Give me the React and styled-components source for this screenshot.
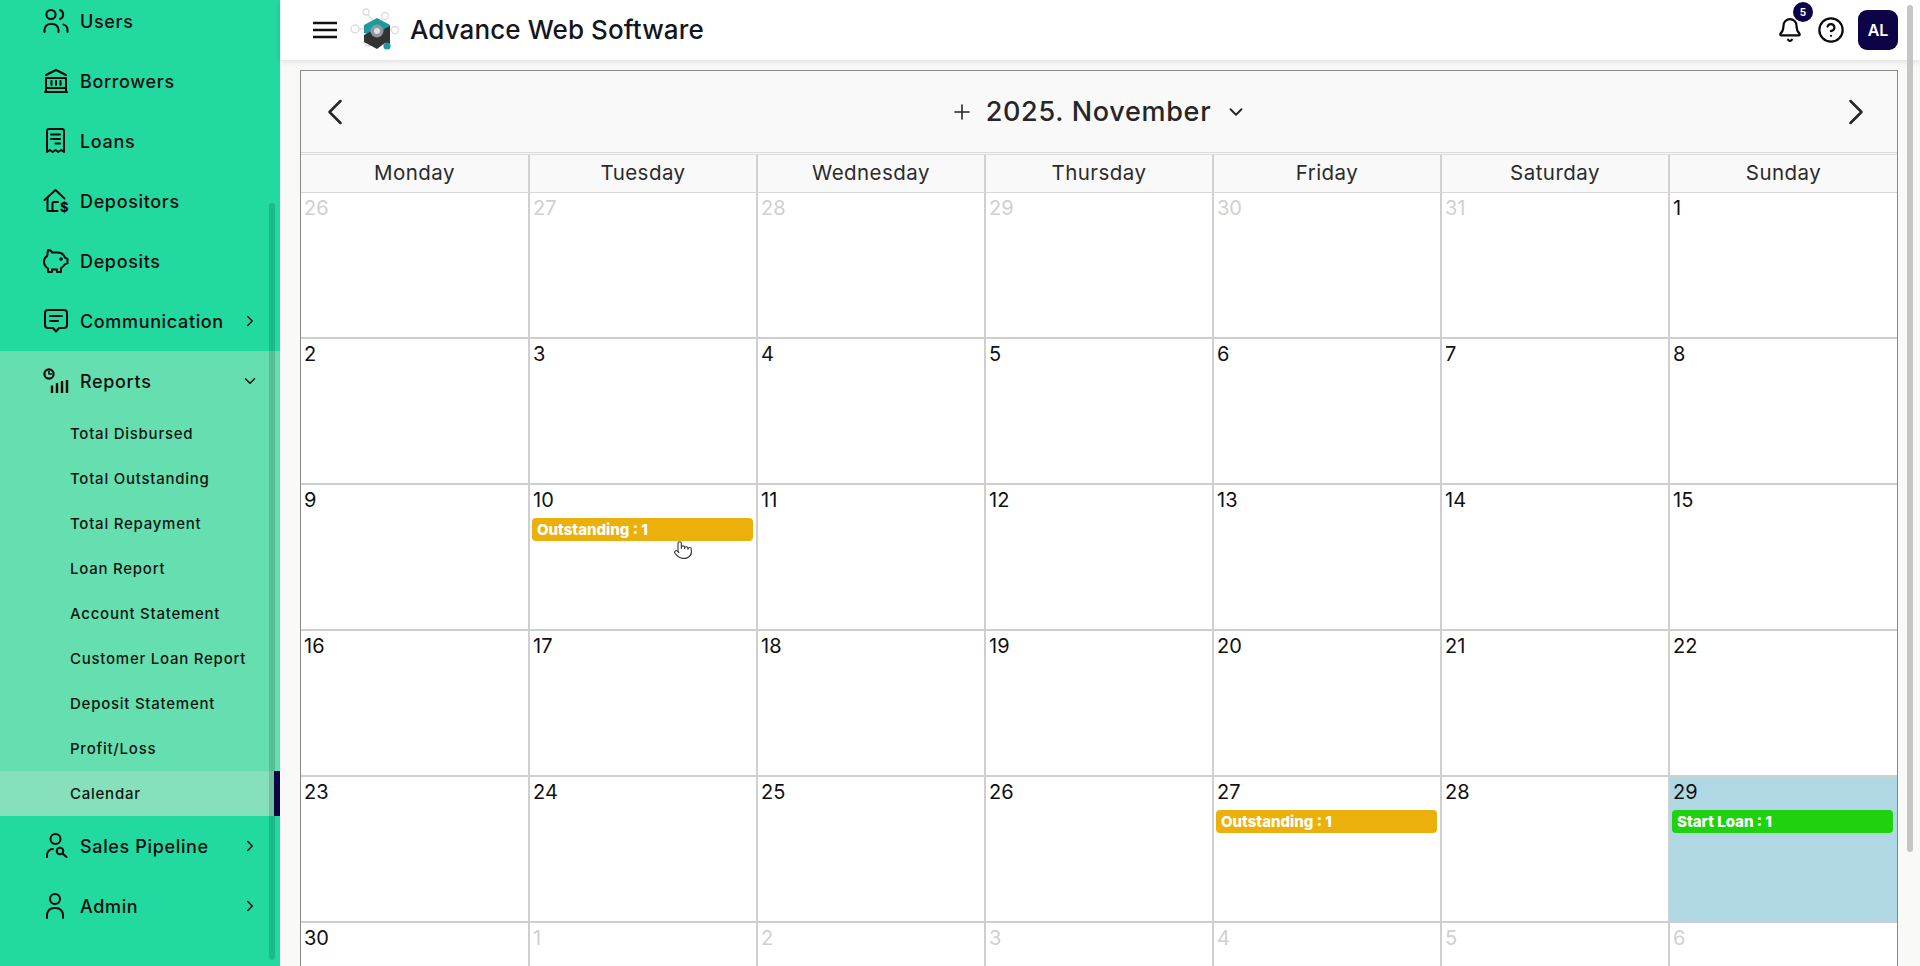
import React from 'react';
import styled, { createGlobalStyle } from 'styled-components';
import { Bell, ChevronDown, ChevronLeft, ChevronRight, CircleHelp, Plus, Pointer } from 'lucide-react';

const GlobalStyle = createGlobalStyle`
    html, body {
        margin: 0;
        height: 100%;
        overflow: hidden;
        background: #fff;
        font-family: Inter, "Open Sans", sans-serif;
    }
    * {
        box-sizing: border-box;
    }
`

const Page = styled.div`
    display: flex;
    height: 966px;
    overflow: hidden;
    position: relative;
`

// sidebar
const Sidebar = styled.aside`
    position: relative;
    width: 280px;
    flex: none;
    background: #22d9a0;
    overflow: hidden;
`
const NavList = styled.nav`
    margin-top: -9px;
`
const NavRow = styled.div`
    display: flex;
    align-items: center;
    height: 60px;
    padding-left: 43px;
    padding-right: 21px;
    color: #0b0f0e;
    font-size: 18px;
    font-weight: 500;
    letter-spacing: 0.65px;
`
const NavIcon = styled.svg`
    width: 26px;
    height: 26px;
    flex: none;
    margin-right: 11px;
    fill: none;
    stroke: #050a09;
    stroke-width: 2;
    stroke-linecap: round;
    stroke-linejoin: round;
`
const NavLabel = styled.span`
    flex: 1;
`
const OpenGroup = styled.div`
    background: #66dfb0;
`
const SubRow = styled.div`
    display: flex;
    align-items: center;
    height: 45px;
    padding-left: 70px;
    color: #0b1512;
    font-size: 15px;
    font-weight: 500;
    letter-spacing: 0.75px;
    background: ${p => (p.$active ? '#85e0bb' : 'transparent')};
    border-right: ${p => (p.$active ? '6px solid #0c0446' : 'none')};
`
const SideThumb = styled.div`
    position: absolute;
    left: 269px;
    top: 203px;
    width: 6px;
    height: 757px;
    border-radius: 3px;
    background: rgba(0, 0, 0, 0.14);
`

// header + content
const Main = styled.main`
    flex: 1;
    min-width: 0;
    display: flex;
    flex-direction: column;
    background: #f9f9f8;
`
const Header = styled.header`
    position: relative;
    z-index: 2;
    display: flex;
    align-items: center;
    flex: none;
    height: 60px;
    padding: 0 22px 0 33px;
    background: #fff;
    box-shadow: 0 2px 6px rgba(0, 0, 0, 0.1);
`
const Burger = styled.svg`
    width: 24px;
    height: 24px;
    flex: none;
    stroke: #111;
    stroke-width: 2.4;
`
const Logo = styled.svg`
    width: 50px;
    height: 50px;
    flex: none;
    margin: 0 10px 0 13px;
`
const Brand = styled.div`
    flex: 1;
    margin-top: -1px;
    color: #15151c;
    font-size: 26px;
    font-weight: 500;
    letter-spacing: 0.1px;
`
const BellBox = styled.div`
    position: relative;
    display: flex;
    margin-right: 14px;
    color: #0a0a0a;
`
const Badge = styled.span`
    position: absolute;
    left: 16px;
    top: -15px;
    width: 20px;
    height: 20px;
    border-radius: 50%;
    background: #0c0446;
    color: #fff;
    font-size: 10px;
    font-weight: 700;
    line-height: 20px;
    text-align: center;
`
const HelpBox = styled.div`
    display: flex;
    margin-right: 13px;
    color: #0a0a0a;
`
const Avatar = styled.div`
    width: 40px;
    height: 40px;
    border-radius: 9px;
    background: #0c0446;
    color: #fff;
    font-size: 16px;
    font-weight: 600;
    line-height: 40px;
    text-align: center;
`
const Content = styled.div`
    flex: 1;
    min-height: 0;
    padding: 10px 22px 0 20px;
    overflow: hidden;
`
const PageThumb = styled.div`
    position: absolute;
    z-index: 3;
    right: 7px;
    top: 5px;
    width: 6px;
    height: 847px;
    border-radius: 3px;
    background: #c6c6c6;
`

// calendar
const columns = '229px repeat(5, 228px) 227px'

const Calendar = styled.section`
    border: 1px solid #888;
    border-bottom: none;
    background: #fff;
`
const CalTop = styled.div`
    display: flex;
    align-items: center;
    justify-content: space-between;
    height: 81px;
    padding: 0 19px 0 12px;
    background: #f9f9f9;
    color: #262626;
`
const MonthTitle = styled.div`
    display: flex;
    align-items: center;
    margin-left: 6px;
`
const MonthText = styled.span`
    margin: 0 14px 0 12px;
    font-size: 27px;
    font-weight: 500;
    letter-spacing: 0.7px;
`
const WeekRow = styled.div`
    display: grid;
    grid-template-columns: ${columns};
    height: 41px;
    border-top: 3px double #dadada;
    border-bottom: 1px solid #d8d8d8;
    background: #f9f9f9;
`
const WeekName = styled.div`
    display: flex;
    align-items: center;
    justify-content: center;
    padding-bottom: 2px;
    border-right: ${p => (p.$last ? 'none' : '2px solid #d2d2d2')};
    color: #2b2b2b;
    font-size: 20.5px;
    font-weight: 400;
    letter-spacing: 0.45px;
`
const DayGrid = styled.div`
    display: grid;
    grid-template-columns: ${columns};
    grid-auto-rows: 146px;
`
const Cell = styled.div`
    position: relative;
    border-right: ${p => (p.$last ? 'none' : '2px solid #cfcfcf')};
    border-bottom: 2px solid #cfcfcf;
    background: ${p => (p.$today ? '#b0d8e4' : '#fff')};
`
const DayNum = styled.div`
    height: 28px;
    margin: 1px 0 4px 3px;
    color: ${p => (p.$muted ? '#d0d0d0' : '#111')};
    font-size: 20px;
    font-weight: 400;
    line-height: 28px;
`
const EventBar = styled.div`
    width: 221px;
    height: 23px;
    margin-left: 2px;
    padding-left: 5px;
    border-radius: 4px;
    background: ${p => p.$color};
    color: #fff;
    font-size: 15px;
    font-weight: 800;
    line-height: 23px;
`
const HandCursor = styled.div`
    position: absolute;
    left: 143px;
    top: 55px;
    display: flex;
    color: #333;
`

const menuTop = ['Users', 'Borrowers', 'Loans', 'Depositors', 'Deposits']
const reports = ['Total Disbursed', 'Total Outstanding', 'Total Repayment', 'Loan Report', 'Account Statement', 'Customer Loan Report', 'Deposit Statement', 'Profit/Loss']
const weekdays = ['Monday', 'Tuesday', 'Wednesday', 'Thursday', 'Friday', 'Saturday', 'Sunday']

const prevDays = [26, 27, 28, 29, 30, 31]
const nextDays = [1, 2, 3, 4, 5, 6]
const days = [
    ...prevDays.map(n => ({ n, muted: true })),
    ...Array.from({ length: 30 }, (_, i) => ({ n: i + 1 })),
    ...nextDays.map(n => ({ n, muted: true })),
]
const events = {
    10: { label: 'Outstanding : 1', color: '#ecb00c' },
    27: { label: 'Outstanding : 1', color: '#ecb00c' },
    29: { label: 'Start Loan : 1', color: '#1fd10f' },
}

const icons = {
    Users: (
        <>
            <circle cx="8" cy="6.5" r="4.6" />
            <path d="M1.5 24v-2a6 6 0 0 1 6-6h2a6 6 0 0 1 6 6v2" />
            <path d="M17 2a4.8 4.8 0 0 1 0 9" />
            <path d="M20.5 16.6a5.5 5.5 0 0 1 4 5.3v2" />
        </>
    ),
    Borrowers: (
        <>
            <path d="M3 7 13 2l10 5" />
            <path d="M3 10h20M3 10v13M23 10v13M2 24h22M3 20h20" />
            <path d="M8.5 13v4M13 13v4M17.5 13v4" />
        </>
    ),
    Loans: (
        <>
            <path d="M4 24V3a2 2 0 0 1 2-2h13a2 2 0 0 1 2 2v21l-2.8-2-2.9 2-2.8-2-2.8 2-2.9-2z" />
            <path d="M8 6.5h9M8 11h9M12.5 15.5h4.5" />
        </>
    ),
    Depositors: (
        <>
            <path d="M1.5 12 12.5 2l9 8.5" />
            <path d="M4.5 10v13h10" />
            <path d="M9.5 23v-7.5a1.5 1.5 0 0 1 1.5-1.5h4" />
            <text x="17" y="24" fontSize="13" fontWeight="800" fill="#050a09" stroke="none" fontFamily="Inter, sans-serif">$</text>
        </>
    ),
    Deposits: (
        <>
            <path d="M5 2c2 0 3.6 1 4.2 2.6H14c4 0 7 2 8 5l2.5 1.2v4.4l-3 1.4c-.8 1.5-2 2.6-3.5 3.5V24h-4v-2.4H9V24H5v-3.5C2.5 19 1 16.5 1 13.5c0-2.2 1.2-4.3 3.2-5.6z" />
            <circle cx="18" cy="11" r=".8" fill="#050a09" />
        </>
    ),
    Communication: (
        <>
            <path d="M5 2h16a3 3 0 0 1 3 3v12a3 3 0 0 1-3 3h-5l-3 3.5-3-3.5H5a3 3 0 0 1-3-3V5a3 3 0 0 1 3-3z" />
            <path d="M7 8h12M7 13h8" />
        </>
    ),
    Reports: (
        <>
            <circle cx="6" cy="6" r="4.6" strokeWidth="2.2" />
            <path d="M6 3.6V6h2.4" strokeWidth="1.6" />
            <path d="M9 17.5V25M14 15v10M19 13v12M24 12v13" strokeWidth="2.4" strokeLinecap="butt" />
        </>
    ),
    'Sales Pipeline': (
        <>
            <circle cx="12.5" cy="6" r="5" />
            <path d="M4 24v-2a6 6 0 0 1 6-6" />
            <circle cx="17" cy="18" r="3.3" />
            <path d="m19.5 20.5 4 3.5" />
        </>
    ),
    Admin: (
        <>
            <circle cx="12" cy="6" r="5" />
            <path d="M4 25v-3a7 7 0 0 1 7-7h2a7 7 0 0 1 7 7v3" />
        </>
    ),
}

const MenuItem = ({ label, arrow }) => (
    <NavRow>
        <NavIcon viewBox="0 0 26 26">{icons[label]}</NavIcon>
        <NavLabel>{label}</NavLabel>
        {arrow === 'right' && <ChevronRight size={18} strokeWidth={2} />}
        {arrow === 'down' && <ChevronDown size={18} strokeWidth={2} />}
    </NavRow>
)

const LogoMark = () => (
    <Logo viewBox="0 0 50 50">
        <g fill="none" stroke="#dcdcdc" strokeWidth="1.3">
            <circle cx="5" cy="24" r="4" />
            <circle cx="16" cy="7" r="3" />
            <circle cx="35" cy="11" r="3.5" />
            <circle cx="45" cy="25" r="3.5" />
            <circle cx="18" cy="38" r="3" />
            <path d="M9 24h5M18 10l5 5M33 14l-3 3M41 25h-3M20 35l3-3" />
        </g>
        <path d="M27 13 40 20v8L27 32 14 28v-8z" fill="#1c9a9e" />
        <path d="M14 30 22 26 27 30 34 24 40 21v18l-5-1-8 6-13-7z" fill="#333" />
        <circle cx="27" cy="26" r="6.5" fill="#8f9a9c" />
        <circle cx="27" cy="26" r="3" fill="#dfe3e3" />
        <circle cx="37" cy="41" r="3.6" fill="#1c9a9e" />
    </Logo>
)

const App = () => (
    <Page>
        <GlobalStyle />
        <Sidebar>
            <NavList>
                {menuTop.map(label => (
                    <MenuItem key={label} label={label} />
                ))}
                <MenuItem label="Communication" arrow="right" />
                <OpenGroup>
                    <MenuItem label="Reports" arrow="down" />
                    {reports.map(label => (
                        <SubRow key={label}>{label}</SubRow>
                    ))}
                    <SubRow $active>Calendar</SubRow>
                </OpenGroup>
                <MenuItem label="Sales Pipeline" arrow="right" />
                <MenuItem label="Admin" arrow="right" />
            </NavList>
            <SideThumb />
        </Sidebar>
        <Main>
            <Header>
                <Burger viewBox="0 0 24 24">
                    <path d="M0 5h24M0 12h24M0 19h24" />
                </Burger>
                <LogoMark />
                <Brand>Advance Web Software</Brand>
                <BellBox>
                    <Bell size={26} strokeWidth={2} />
                    <Badge>5</Badge>
                </BellBox>
                <HelpBox>
                    <CircleHelp size={28} strokeWidth={1.9} />
                </HelpBox>
                <Avatar>AL</Avatar>
            </Header>
            <Content>
                <Calendar>
                    <CalTop>
                        <ChevronLeft size={44} strokeWidth={1.4} />
                        <MonthTitle>
                            <Plus size={24} strokeWidth={1.6} />
                            <MonthText>2025. November</MonthText>
                            <ChevronDown size={22} strokeWidth={2} />
                        </MonthTitle>
                        <ChevronRight size={44} strokeWidth={1.4} />
                    </CalTop>
                    <WeekRow>
                        {weekdays.map((d, i) => (
                            <WeekName key={d} $last={i === 6}>{d}</WeekName>
                        ))}
                    </WeekRow>
                    <DayGrid>
                        {days.map((d, i) => {
                            const ev = !d.muted && events[d.n]
                            return (
                                <Cell key={i} $last={i % 7 === 6} $today={!d.muted && d.n === 29}>
                                    <DayNum $muted={d.muted}>{d.n}</DayNum>
                                    {ev && <EventBar $color={ev.color}>{ev.label}</EventBar>}
                                    {!d.muted && d.n === 10 && (
                                        <HandCursor>
                                            <Pointer size={20} strokeWidth={1.3} fill="#fff" />
                                        </HandCursor>
                                    )}
                                </Cell>
                            )
                        })}
                    </DayGrid>
                </Calendar>
            </Content>
        </Main>
        <PageThumb />
    </Page>
);

export default App;
